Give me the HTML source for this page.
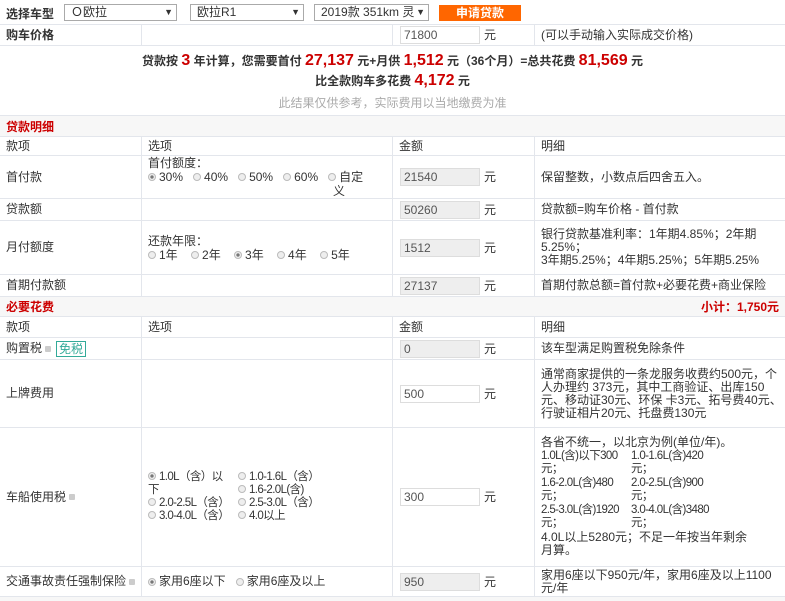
<!DOCTYPE html>
<html><head><meta charset="utf-8"><style>
*{box-sizing:border-box;margin:0;padding:0}
body{width:785px;height:601px;overflow:hidden;background:#fff;font-family:"Liberation Sans","Noto Sans CJK SC",sans-serif;font-size:12px;color:#333}
.r{position:absolute;left:0;width:785px;border-bottom:1px solid #e3e6ec}
.c{position:absolute;top:0;bottom:0;border-left:1px solid #e3e6ec;padding-left:6px;display:flex;align-items:center;line-height:13px}
.c1{left:0;width:141px}.c2{left:141px;width:251px}.c3{left:392px;width:142px}.c4{left:534px;width:251px;line-height:13px}
.inp{position:absolute;left:7px;width:80px;height:18px;border:1px solid #ddd;background:#eee;padding-left:3px;line-height:16px;font-size:12px;color:#555;top:50%;margin-top:-9px}
.inp.w{background:#fff}
.yuan{position:absolute;left:91px;top:50%;margin-top:-7px;line-height:14px}
.sec{background:#f7f7f7;color:#c00;font-weight:bold;padding-left:6px;display:flex;align-items:center}
.rad{display:inline-block;width:8px;height:8px;border-radius:50%;border:1px solid #bbb;background:#eee;margin-right:3px;vertical-align:0}
.rad.on{background:radial-gradient(#777 35%,#eee 45%)}
.red{color:#c00;font-weight:bold;font-size:16px}
.sel{position:absolute;top:4px;height:17px;border:1px solid #aaa;background:#fff;padding-left:6px;line-height:15px;font-size:12px}
.sel:after{content:"▼";position:absolute;right:3px;top:0;font-size:9px}
.q{display:inline-block;width:6px;height:6px;background:#ccc;border-radius:1px;margin-left:3px}
.tight{letter-spacing:-0.6px;font-size:11.5px}
</style></head><body>
<div class="r" style="top:0;height:25px;border-bottom:1px solid #e3e6ec">
<span style="position:absolute;left:6px;top:5px;font-weight:bold">选择车型</span>
<div class="sel" style="left:64px;width:113px">Ｏ欧拉</div>
<div class="sel" style="left:190px;width:114px">欧拉R1</div>
<div class="sel" style="left:314px;width:115px;overflow:hidden;white-space:nowrap">2019款 351km 灵</div>
<div style="position:absolute;left:439px;top:5px;width:82px;height:16px;background:#f60;color:#fff;font-weight:bold;text-align:center;line-height:16px">申请贷款</div>
</div>
<div class="r" style="top:25px;height:21px"><div class="c c1" style="border-left:0;font-weight:bold">购车价格</div><div class="c c2"></div><div class="c c3"><div class="inp w">71800</div><span class="yuan">元</span></div><div class="c c4">(可以手动输入实际成交价格)</div></div>
<div class="r" style="top:46px;height:70px;text-align:center">
<div style="position:absolute;top:6px;width:785px;font-weight:bold">贷款按 <span class="red">3</span> 年计算，您需要首付 <span class="red">27,137</span> 元+月供 <span class="red">1,512</span> 元（36个月）=总共花费 <span class="red">81,569</span> 元</div>
<div style="position:absolute;top:26px;width:785px;font-weight:bold">比全款购车多花费 <span class="red">4,172</span> 元</div>
<div style="position:absolute;top:48px;width:785px;color:#aaa">此结果仅供参考，实际费用以当地缴费为准</div>
</div>
<div class="r sec" style="top:116px;height:21px">贷款明细</div>
<div class="r" style="top:137px;height:19px"><div class="c c1" style="border-left:0">款项</div><div class="c c2">选项</div><div class="c c3">金额</div><div class="c c4">明细</div></div>
<div class="r" style="top:156px;height:43px"><div class="c c1" style="border-left:0">首付款</div><div class="c c2"><div style="line-height:14px">首付额度：<br><span class="rad on"></span>30% &nbsp; <span class="rad"></span>40% &nbsp; <span class="rad"></span>50% &nbsp; <span class="rad"></span>60% &nbsp; <span class="rad"></span>自定<br><span style="margin-left:185px">义</span></div></div><div class="c c3"><div class="inp">21540</div><span class="yuan">元</span></div><div class="c c4">保留整数，小数点后四舍五入。</div></div>
<div class="r" style="top:199px;height:22px"><div class="c c1" style="border-left:0">贷款额</div><div class="c c2"></div><div class="c c3"><div class="inp">50260</div><span class="yuan">元</span></div><div class="c c4">贷款额=购车价格 - 首付款</div></div>
<div class="r" style="top:221px;height:54px"><div class="c c1" style="border-left:0">月付额度</div><div class="c c2"><div style="line-height:14px">还款年限：<br><span class="rad"></span>1年 &nbsp;&nbsp; <span class="rad"></span>2年 &nbsp;&nbsp; <span class="rad on"></span>3年 &nbsp;&nbsp; <span class="rad"></span>4年 &nbsp;&nbsp; <span class="rad"></span>5年</div></div><div class="c c3"><div class="inp">1512</div><span class="yuan">元</span></div><div class="c c4">银行贷款基准利率：1年期4.85%；2年期5.25%；<br>3年期5.25%；4年期5.25%；5年期5.25%</div></div>
<div class="r" style="top:275px;height:22px"><div class="c c1" style="border-left:0">首期付款额</div><div class="c c2"></div><div class="c c3"><div class="inp">27137</div><span class="yuan">元</span></div><div class="c c4">首期付款总额=首付款+必要花费+商业保险</div></div>
<div class="r sec" style="top:297px;height:20px">必要花费<span style="position:absolute;right:6px">小计：1,750元</span></div>
<div class="r" style="top:317px;height:21px"><div class="c c1" style="border-left:0">款项</div><div class="c c2">选项</div><div class="c c3">金额</div><div class="c c4">明细</div></div>
<div class="r" style="top:338px;height:22px"><div class="c c1" style="border-left:0">购置税<span class="q"></span><span style="border:1px solid #3a9;color:#3a9;padding:0 2px;margin-left:5px;line-height:14px">免税</span></div><div class="c c2"></div><div class="c c3"><div class="inp">0</div><span class="yuan">元</span></div><div class="c c4">该车型满足购置税免除条件</div></div>
<div class="r" style="top:360px;height:68px"><div class="c c1" style="border-left:0">上牌费用</div><div class="c c2"></div><div class="c c3"><div class="inp w">500</div><span class="yuan">元</span></div><div class="c c4">通常商家提供的一条龙服务收费约500元，个人办理约 373元，其中工商验证、出库150元、移动证30元、环保 卡3元、拓号费40元、行驶证相片20元、托盘费130元</div></div>
<div class="r" style="top:428px;height:139px"><div class="c c1" style="border-left:0">车船使用税<span class="q"></span></div><div class="c c2"><div class="tight" style="line-height:13px;width:180px;display:grid;grid-template-columns:90px 90px;white-space:nowrap"><span><span class="rad on"></span>1.0L（含）以<br>下</span><span><span class="rad"></span>1.0-1.6L（含）<br><span class="rad"></span>1.6-2.0L(含)</span><span><span class="rad"></span>2.0-2.5L（含）</span><span><span class="rad"></span>2.5-3.0L（含）</span><span><span class="rad"></span>3.0-4.0L（含）</span><span><span class="rad"></span>4.0以上</span></div></div><div class="c c3"><div class="inp w">300</div><span class="yuan">元</span></div><div class="c c4"><div style="line-height:13.5px">各省不统一，以北京为例(单位/年)。<div class="tight" style="display:grid;grid-template-columns:90px 90px;white-space:nowrap">
<span>1.0L(含)以下300<br>元；</span><span>1.0-1.6L(含)420<br>元；</span><span>1.6-2.0L(含)480<br>元；</span><span>2.0-2.5L(含)900<br>元；</span><span>2.5-3.0L(含)1920<br>元；</span><span>3.0-4.0L(含)3480<br>元；</span></div>4.0L以上5280元；不足一年按当年剩余<br>月算。</div></div></div>
<div class="r" style="top:567px;height:30px"><div class="c c1" style="border-left:0;white-space:nowrap">交通事故责任强制保险<span class="q"></span></div><div class="c c2"><span class="rad on"></span>家用6座以下 &nbsp;&nbsp; <span class="rad"></span>家用6座及以上</div><div class="c c3"><div class="inp">950</div><span class="yuan">元</span></div><div class="c c4">家用6座以下950元/年，家用6座及以上1100元/年</div></div>
<div class="r" style="top:597px;height:4px;background:#f7f7f7;border:0"></div>
</body></html>
